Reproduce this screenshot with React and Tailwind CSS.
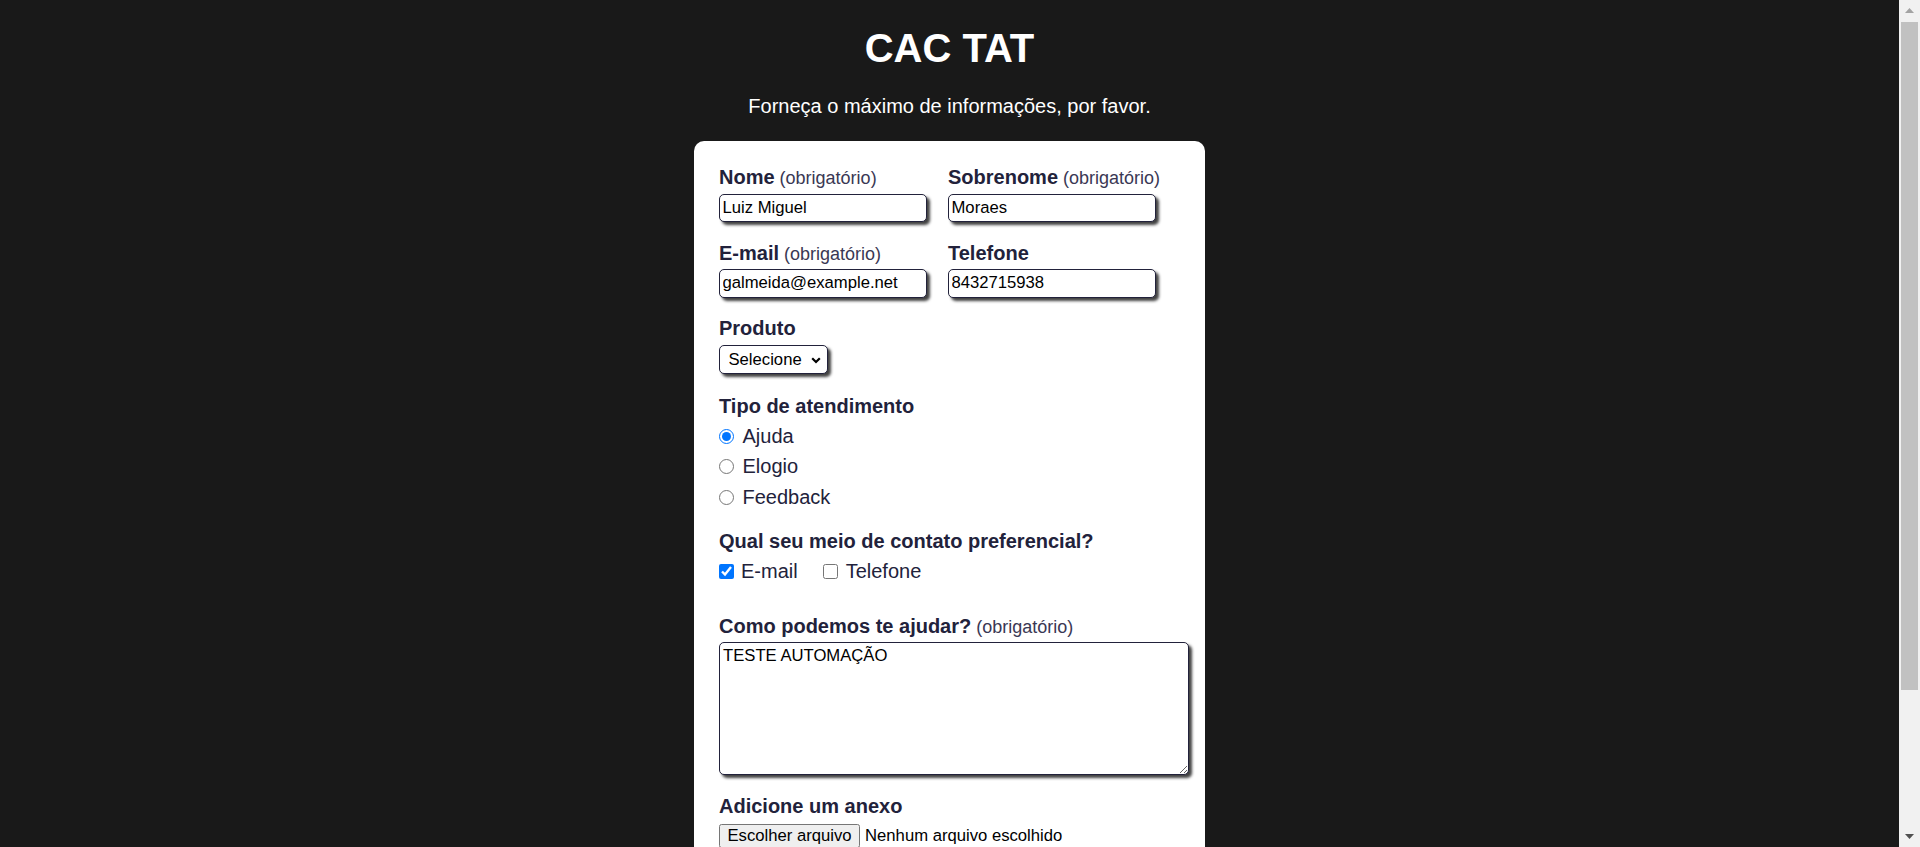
import React from "react";

const fieldCls =
    "block rounded-[5px] border border-[#22223b] bg-white text-[16.67px] text-black outline-none shadow-[3px_3px_3px_rgba(0,0,0,0.75)]";

function FieldLabel({ title, required }) {
    return (
        <label className="block whitespace-nowrap text-[20px] leading-[23px] font-bold text-[#22223b]">
            {title}
            {required && (
                <span className="text-[18px] leading-none font-normal text-[#3a3854]"> (obrigatório)</span>
            )}
        </label>
    );
}

function TextField({ title, required, value }) {
    return (
        <div className="flex flex-col">
            <FieldLabel title={title} required={required} />
            <input
                type="text"
                defaultValue={value}
                className={`${fieldCls} mt-[4.5px] h-[28.5px] w-[208px] px-[2.5px]`}
            />
        </div>
    );
}

function Scrollbar() {
    return (
        <div className="flex w-[21px] shrink-0 flex-col bg-[#f1f1f1]">
            <div className="flex h-[21px] items-center justify-center">
                <svg width="9" height="5" viewBox="0 0 9 5">
                    <path d="M0 5 L4.5 0 L9 5 Z" fill="#a3a3a3" />
                </svg>
            </div>
            <div className="flex-1 px-[2px] pt-[1px]">
                <div className="h-[668px] bg-[#c1c1c1]" />
            </div>
            <div className="flex h-[21px] items-center justify-center">
                <svg width="9" height="5" viewBox="0 0 9 5">
                    <path d="M0 0 L4.5 5 L9 0 Z" fill="#505050" />
                </svg>
            </div>
        </div>
    );
}

export default function App() {
    return (
        <div className="flex h-[847px] w-full overflow-hidden bg-[#191919] font-['Liberation_Sans',Arial,sans-serif]">
            <main className="flex min-w-0 flex-1 flex-col items-center">
                <h1 className="mt-[25px] text-[40px] leading-[46px] font-bold text-white">CAC TAT</h1>
                <p className="mt-[24px] text-[20px] leading-[23px] text-white">
                    Forneça o máximo de informações, por favor.
                </p>

                <form className="mt-[23px] w-[511px] shrink-0 rounded-[10px] bg-white px-[25px] pt-[25px] pb-[60px] text-[#22223b]">
                    <div className="grid grid-cols-[208px_208px] gap-x-[21px] gap-y-[19.5px]">
                        <TextField title="Nome" required value="Luiz Miguel" />
                        <TextField title="Sobrenome" required value="Moraes" />
                        <TextField title="E-mail" required value="galmeida@example.net" />
                        <TextField title="Telefone" value="8432715938" />
                    </div>

                    <div className="mt-[19.5px]">
                        <FieldLabel title="Produto" />
                        <div className="relative mt-[4.7px] w-[109px]">
                            <select className={`${fieldCls} h-[29px] w-full appearance-none pl-[8.5px]`}>
                                <option>Selecione</option>
                                <option>Blog</option>
                                <option>Cursos</option>
                                <option>Mentoria</option>
                                <option>YouTube</option>
                            </select>
                            <svg
                                className="pointer-events-none absolute top-[12.5px] right-[7.5px]"
                                width="10"
                                height="7"
                                viewBox="0 0 10 7"
                            >
                                <path d="M1.2 1.2 L5 5 L8.8 1.2" stroke="#000" strokeWidth="2.2" fill="none" />
                            </svg>
                        </div>
                    </div>

                    <div className="mt-[21px]">
                        <FieldLabel title="Tipo de atendimento" />
                        <div className="mt-[3px]">
                            {["Ajuda", "Elogio", "Feedback"].map((t, i) => (
                                <label
                                    key={t}
                                    className="flex h-[30.7px] items-center text-[20px] leading-[23px] text-[#22223b]"
                                >
                                    <input
                                        type="radio"
                                        name="atendimento"
                                        defaultChecked={i === 0}
                                        className="m-0 h-[15px] w-[15px]"
                                    />
                                    <span className="ml-[8.5px]">{t}</span>
                                </label>
                            ))}
                        </div>
                    </div>

                    <div className="mt-[17.4px]">
                        <FieldLabel title="Qual seu meio de contato preferencial?" />
                        <div className="mt-[3px] flex h-[30.7px] items-center text-[20px] leading-[23px] text-[#22223b]">
                            <label className="flex items-center">
                                <input type="checkbox" defaultChecked className="m-0 h-[15px] w-[15px]" />
                                <span className="ml-[7px]">E-mail</span>
                            </label>
                            <label className="ml-[25.5px] flex items-center">
                                <input type="checkbox" className="m-0 h-[15px] w-[15px]" />
                                <span className="ml-[7.5px]">Telefone</span>
                            </label>
                        </div>
                    </div>

                    <div className="mt-[28.2px]">
                        <FieldLabel title="Como podemos te ajudar?" required />
                        <textarea
                            defaultValue="TESTE AUTOMAÇÃO"
                            className={`${fieldCls} mt-[4.4px] h-[132.7px] w-[470px] resize px-[3px] py-[2.5px] leading-[normal]`}
                        />
                    </div>

                    <div className="mt-[20px]">
                        <FieldLabel title="Adicione um anexo" />
                        <div className="mt-[5.4px] flex items-center text-[16.67px] text-black">
                            <button
                                type="button"
                                className="h-[24px] rounded-[2.5px] border border-[#767676] bg-[#efefef] px-[7.5px] leading-[normal]"
                            >
                                Escolher arquivo
                            </button>
                            <span className="ml-[5px]">Nenhum arquivo escolhido</span>
                        </div>
                    </div>
                </form>
            </main>
            <Scrollbar />
        </div>
    );
}
